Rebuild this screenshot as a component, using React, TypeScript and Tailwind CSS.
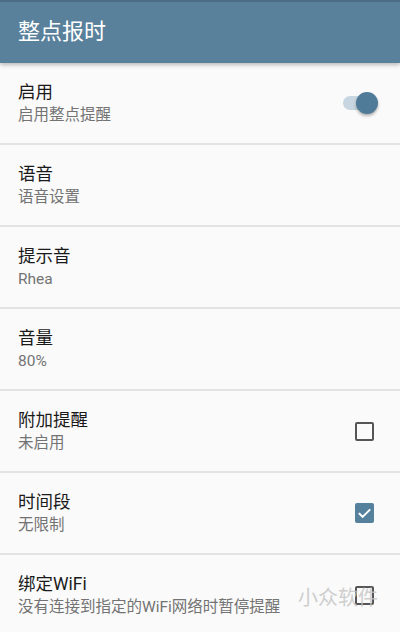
import React from "react";

type Row = { title: string; sub: string; control?: "switch" | "off" | "on" };

const rows: Row[] = [
  { title: "启用", sub: "启用整点提醒", control: "switch" },
  { title: "语音", sub: "语音设置" },
  { title: "提示音", sub: "Rhea" },
  { title: "音量", sub: "80%" },
  { title: "附加提醒", sub: "未启用", control: "off" },
  { title: "时间段", sub: "无限制", control: "on" },
  { title: "绑定WiFi", sub: "没有连接到指定的WiFi网络时暂停提醒", control: "off" },
];

function Control({ kind }: { kind?: Row["control"] }) {
  if (kind === "switch") {
    return (
      <div className="relative w-[36px] h-[22px] mr-[1px]">
        <div className="absolute left-[1px] top-[4px] w-[30px] h-[14px] rounded-full bg-[#c7d6e0]" />
        <div className="absolute right-0 top-0 w-[22px] h-[22px] rounded-full bg-[#4f7b99] shadow-[0_2px_3px_rgba(0,0,0,0.3)]" />
      </div>
    );
  }
  if (kind === "off") {
    return <div className="w-[19px] h-[19px] border-2 border-[#555555] rounded-[2px] mr-[5px]" />;
  }
  if (kind === "on") {
    return (
      <div className="w-[19px] h-[20px] bg-[#55819d] rounded-[2px] mr-[5px] flex items-center justify-center">
        <svg width="15" height="15" viewBox="0 0 24 24" fill="none" stroke="white" strokeWidth="3.2" strokeLinecap="square">
          <path d="M4 12.5l5 5L20 6.5" />
        </svg>
      </div>
    );
  }
  return null;
}

export default function App() {
  return (
    <div
      className="w-[400px] h-[632px] bg-[#fafafa] overflow-hidden relative"
      style={{ fontFamily: "Roboto, 'Noto Sans CJK SC', sans-serif" }}
    >
      <div className="h-[63px] bg-[#5a819c] border-t-2 border-[#4a6d85] flex items-center pl-[18px] shadow-[0_2px_4px_rgba(0,0,0,0.25)] relative z-10">
        <span className="text-white text-[22px] leading-none pb-[1px]">整点报时</span>
      </div>
      {rows.map((r) => (
        <div key={r.title} className="h-[82px] border-b-2 border-[#e3e3e3] flex items-center pl-[18px] pr-[21px]">
          <div className="flex-1 flex flex-col pt-[2px]">
            <span className="text-[17.5px] leading-[23px] text-[#1a1a1a]">{r.title}</span>
            <span className="text-[15.5px] leading-[23px] text-[#737373]">{r.sub}</span>
          </div>
          <Control kind={r.control} />
        </div>
      ))}
      <div className="absolute left-[298px] top-[588px] text-[20px] leading-none text-[#c4c4c4] opacity-80">
        小众软件
      </div>
    </div>
  );
}
